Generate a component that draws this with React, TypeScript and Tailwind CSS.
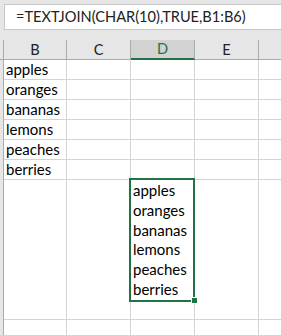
const fruits = ['apples', 'oranges', 'bananas', 'lemons', 'peaches', 'berries'];
const cols = ['B', 'C', 'D', 'E'];

function Row({ height, children }: { height: string; children?: React.ReactNode }) {
  return <div className={`grid grid-cols-[4px_63px_64px_64px_64px_1fr] ${height}`}>{children}</div>;
}

function Cell({ children, className = '' }: { children?: React.ReactNode; className?: string }) {
  return (
    <div className={`relative border-r border-b border-[#d4d4d4] bg-white pl-[2px] leading-[19px] whitespace-nowrap ${className}`}>
      {children}
    </div>
  );
}

export default function App() {
  return (
    <div className="w-[281px] h-[335px] overflow-hidden bg-[#e6e6e6] font-['Lato',sans-serif] text-[15px] text-black">
      {/* formula bar */}
      <div className="h-[40px] pt-[4px] pl-[4px]">
        <div className="h-[26px] bg-white border border-r-0 border-[#c6c6c6] pl-[11px] leading-[24px] text-[14.6px] text-[#222]">
          =TEXTJOIN(CHAR(10),TRUE,B1:B6)
        </div>
      </div>

      {/* column headers */}
      <div className="grid grid-cols-[4px_63px_64px_64px_64px_1fr] h-[20px] text-[14.6px]">
        <div className="border-r border-b border-[#ababab]" />
        {cols.map((c) =>
          c === 'D' ? (
            <div key={c} className="bg-[#d2d2d2] border-r border-[#ababab] border-b-2 border-b-[#217346] text-center leading-[18px] text-[#217346]">
              {c}
            </div>
          ) : (
            <div key={c} className="border-r border-b border-[#ababab] text-center leading-[19px] text-[#222]">
              {c}
            </div>
          )
        )}
        <div className="border-b border-[#ababab]" />
      </div>

      {/* rows 1-6 */}
      {fruits.map((f) => (
        <Row key={f} height="h-[20px]">
          <div className="border-r border-[#ababab]" />
          <Cell>{f}</Cell>
          <Cell />
          <Cell />
          <Cell />
          <Cell className="border-r-0" />
        </Row>
      ))}

      {/* row 7 with joined text */}
      <Row height="h-[120px]">
        <div className="border-r border-[#ababab]" />
        <Cell />
        <Cell />
        <Cell className="z-10">
          <div className="leading-[19.8px] pt-[1px]">
            {fruits.map((f) => (
              <div key={f}>{f}</div>
            ))}
          </div>
          <div className="absolute -left-[2px] -top-[2px] -right-[1px] -bottom-[2px] border-2 border-[#217346]">
            <div className="absolute -right-[4px] -bottom-[3px] w-[5px] h-[5px] bg-[#217346] outline outline-1 outline-white" />
          </div>
        </Cell>
        <Cell />
        <Cell className="border-r-0" />
      </Row>

      {/* rows 8-9 */}
      {[0, 1].map((i) => (
        <Row key={i} height="h-[20px]">
          <div className="border-r border-[#ababab]" />
          <Cell />
          <Cell />
          <Cell />
          <Cell />
          <Cell className="border-r-0" />
        </Row>
      ))}
    </div>
  );
}
